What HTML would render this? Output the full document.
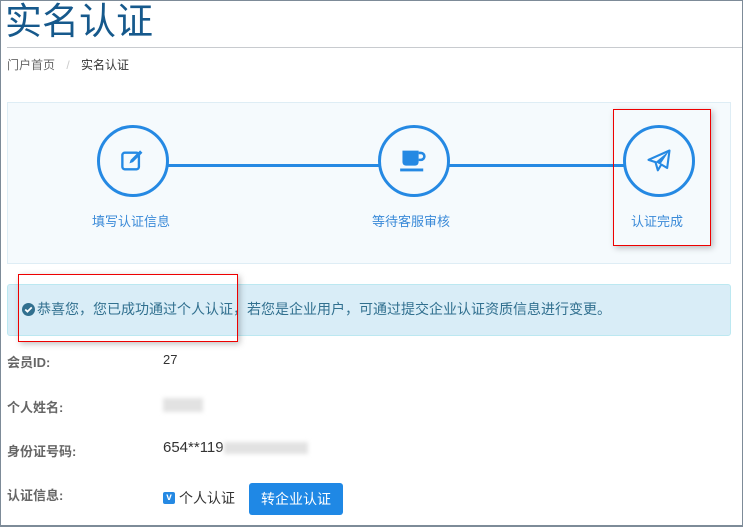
<!DOCTYPE html>
<html><head><meta charset="utf-8"><style>
*{margin:0;padding:0;box-sizing:border-box}
body{width:743px;height:527px;overflow:hidden;background:#fff;font-family:"Liberation Sans","Noto Sans CJK SC",sans-serif;position:relative}
.a{position:absolute;white-space:nowrap}
.circ{position:absolute;width:72px;height:72px;border:3px solid #2589e3;border-radius:50%;background:#f5fafd;display:flex;align-items:center;justify-content:center}
.lab{position:absolute;font-size:13px;color:#3a8ad8;white-space:nowrap}
.fl{position:absolute;left:7px;font-size:13px;font-weight:bold;color:#666}
.fv{position:absolute;left:163px;font-size:13px;color:#333}
.blur{display:inline-block;background:#e2e2e2;filter:blur(2px);vertical-align:middle}
</style></head><body>
<div class="a" style="left:0;top:0;width:743px;height:527px;border:1px solid #7d8b98;border-bottom:2px solid #7d8b98;z-index:5"></div>
<div class="a" style="left:5px;top:0px;font-size:37px;color:#16598c;line-height:44px">实名认证</div>
<div class="a" style="left:7px;top:47px;width:735px;height:1px;background:#c8cbcf"></div>
<div class="a" style="left:7px;top:56px;font-size:12px;color:#666">门户首页 <span style="color:#ccc;margin:0 8px">/</span> <span style="color:#333">实名认证</span></div>

<div class="a" style="left:7px;top:102px;width:724px;height:162px;background:#f5fafd;border:1px solid #deedf5"></div>
<div class="a" style="left:165px;top:164px;width:460px;height:3px;background:#2589e3"></div>
<div class="circ" style="left:97px;top:125px"><svg width="26" height="26" viewBox="0 0 22 22"><rect x="2" y="4" width="14" height="14" rx="2" fill="none" stroke="#2589e3" stroke-width="2"/><path d="M8 13l1-3 8-8 2 2-8 8z" fill="#2589e3"/></svg></div>
<div class="circ" style="left:378px;top:125px"><svg width="30" height="26" viewBox="0 0 26 22"><path d="M3 2h14v10a3 3 0 0 1-3 3H6a3 3 0 0 1-3-3z" fill="#2589e3"/><path d="M17 4h2a3 3 0 0 1 0 6h-2" fill="none" stroke="#2589e3" stroke-width="2.2"/><rect x="1" y="17.5" width="20" height="2.5" fill="#2589e3"/></svg></div>
<div class="circ" style="left:623px;top:125px"><svg width="28" height="28" viewBox="0 0 24 24"><path d="M21 3L3 11l6 2 2 7 3-5 5 3z" fill="none" stroke="#2589e3" stroke-width="1.8" stroke-linejoin="round"/><path d="M9 13l12-10-8 12z" fill="#2589e3"/></svg></div>
<div class="lab" style="left:92px;top:211px">填写认证信息</div>
<div class="lab" style="left:372px;top:211px">等待客服审核</div>
<div class="lab" style="left:631px;top:211px">认证完成</div>
<div class="a" style="left:613px;top:109px;width:98px;height:137px;border:1px solid #e00;box-shadow:2px 2px 6px rgba(0,0,0,.25)"></div>

<div class="a" style="left:7px;top:284px;width:724px;height:52px;background:#d9edf7;border:1px solid #bce8f1;border-radius:3px"></div>
<div class="a" style="left:22px;top:299px;font-size:14px;color:#31708f;display:flex;align-items:center"><svg width="13" height="13" viewBox="0 0 12 12" style="margin-right:2px"><circle cx="6" cy="6" r="6" fill="#31708f"/><path d="M3 6l2 2 4-4" stroke="#fff" stroke-width="1.6" fill="none"/></svg>恭喜您，您已成功通过个人认证，若您是企业用户，可通过提交企业认证资质信息进行变更。</div>
<div class="a" style="left:18px;top:274px;width:220px;height:68px;border:1px solid #e00;box-shadow:2px 2px 6px rgba(0,0,0,.25)"></div>

<div class="fl" style="top:352px">会员ID:</div>
<div class="fv" style="top:352px">27</div>
<div class="fl" style="top:397px">个人姓名:</div>
<div class="fv" style="top:396px"><span class="blur" style="width:40px;height:14px"></span></div>
<div class="fl" style="top:441px">身份证号码:</div>
<div class="fv" style="top:439px;font-size:15px">654**119<span class="blur" style="width:84px;height:12px"></span></div>
<div class="fl" style="top:485px">认证信息:</div>
<div class="a" style="left:163px;top:488px;font-size:14px;color:#333;display:flex;align-items:center"><span style="width:12px;height:12px;background:#2589e3;border-radius:2px;color:#fff;font-size:10px;font-weight:bold;line-height:12px;text-align:center;margin-right:4px">v</span>个人认证</div>
<div class="a" style="left:249px;top:483px;width:94px;height:32px;background:#1f88e5;border-radius:3px;color:#fff;font-size:14px;text-align:center;line-height:32px">转企业认证</div>
</body></html>
